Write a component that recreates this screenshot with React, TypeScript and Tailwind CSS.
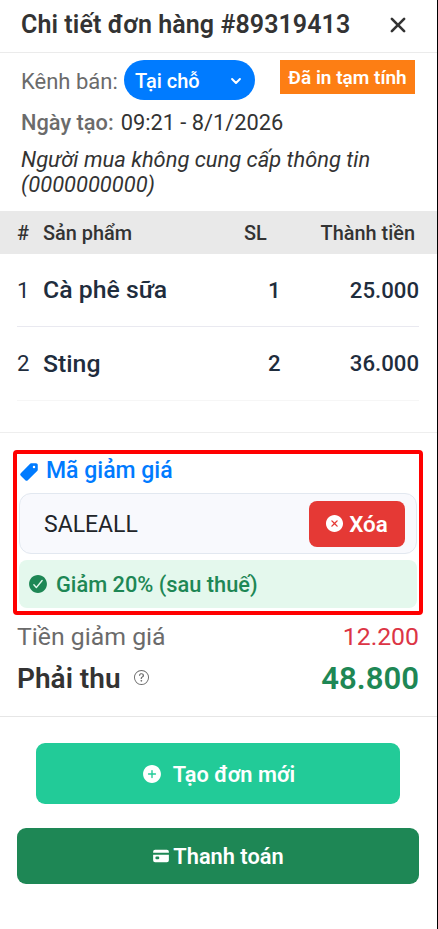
import React from 'react';
import {
    IoAddCircle,
    IoCard,
    IoCheckmarkCircle,
    IoChevronDown,
    IoClose,
    IoCloseCircle,
    IoPricetag,
} from 'react-icons/io5';
import { BsQuestionCircle } from 'react-icons/bs';

interface OrderItem {
    name: string;
    quantity: number;
    total: string;
}

const items: OrderItem[] = [
    { name: 'Cà phê sữa', quantity: 1, total: '25.000' },
    { name: 'Sting', quantity: 2, total: '36.000' },
];

const Header: React.FC = () => (
    <header className="flex h-[53px] items-start justify-between border-b border-[#ebebeb] pt-2 pr-[25px] pl-[21px]">
        <h1 className="text-[25px] leading-[34px] font-semibold tracking-[0.08px] whitespace-nowrap">
            Chi tiết đơn hàng #89319413
        </h1>
        <button className="mt-[3px]">
            <IoClose size={28} />
        </button>
    </header>
);

const OrderInfo: React.FC = () => (
    <section className="h-[158px] pt-[7px] pr-[22px] pl-[21px] text-[22px]">
        <div className="flex h-10 items-start">
            <span className="w-[103px] leading-[44px] whitespace-nowrap text-[#6b6b6b]">Kênh bán:</span>
            <button className="flex h-10 w-[131px] items-center justify-between rounded-full bg-[#007bff] pt-px pr-3 pl-[11px] text-[20px] font-medium text-white">
                Tại chỗ
                <IoChevronDown size={14} className="[&_path]:[stroke-width:72px]" />
            </button>
            <span className="ml-auto h-[34px] w-[135px] bg-[#fd7e14] text-center text-[19px] leading-[36px] font-semibold whitespace-nowrap text-white">
                Đã in tạm tính
            </span>
        </div>
        <p className="mt-2 flex gap-[7px] text-[21.8px] leading-[30px] whitespace-nowrap">
            <span className="font-medium text-[#6b6b6b]">Ngày tạo:</span>
            <span>09:21 - 8/1/2026</span>
        </p>
        <p className="mt-[9px] text-[21.9px] leading-[25px] italic">
            Người mua không cung cấp thông tin
            <br />
            (0000000000)
        </p>
    </section>
);

const ItemsTable: React.FC = () => (
    <section className="h-[222px] border-b border-[#eeeeee]">
        <div className="flex h-[43px] items-center bg-[#e9e9e9] pt-0.5 pr-[22px] pl-[17px] text-[19.9px] font-medium">
            <span className="w-[26px]">#</span>
            <span className="w-[201px]">Sản phẩm</span>
            <span>SL</span>
            <span className="ml-auto">Thành tiền</span>
        </div>
        <ul className="pr-[18px] pl-[17px] text-[22.2px] text-[#1f2d3d]">
            {items.map((item, index) => (
                <li
                    key={item.name}
                    className="flex h-[73px] items-center border-b border-[#e9e9f0] pt-px last:h-[74px] last:border-[#f6f6f6]"
                >
                    <span className="w-[26px]">{index + 1}</span>
                    <span className="w-[225px] pb-px text-[24.8px] font-medium">{item.name}</span>
                    <span className="font-medium">{item.quantity}</span>
                    <span className="ml-auto font-medium">{item.total}</span>
                </li>
            ))}
        </ul>
    </section>
);

const DiscountBox: React.FC = () => (
    <section className="mt-[17px] ml-[13px] h-[165px] w-[410px] rounded-[4px] border-4 border-[#ff0000] px-0.5">
        <div className="flex h-[39px] items-center gap-[7px] pb-1 text-[23px] font-medium text-[#007bff]">
            <IoPricetag size={20} />
            Mã giảm giá
        </div>
        <div className="flex h-[61px] items-center justify-between rounded-xl border border-[#e2e8f0] bg-[#f8f9fd] pr-[11px] pl-6">
            <span className="pt-1 text-[23px] text-[#212529]">SALEALL</span>
            <button className="flex h-[46px] w-24 items-center justify-center gap-1 rounded-lg bg-[#e53935] pt-[3px] pr-0.5 text-[22.4px] font-semibold text-white">
                <IoCloseCircle size={21} className="-mt-1" />
                Xóa
            </button>
        </div>
        <div className="mt-1.5 flex h-12 items-center gap-2 rounded-lg bg-[#e4f8ed] pt-[3px] pl-2 text-[21.8px] font-medium text-[#1e8755]">
            <IoCheckmarkCircle size={22} className="-mt-1 -mr-px" />
            Giảm 20% (sau thuế)
        </div>
    </section>
);

const Summary: React.FC = () => (
    <section className="h-[102px] border-b border-[#e6e6e6] pt-[5px] pr-[18px] pl-[17px]">
        <div className="flex h-[34px] items-center justify-between text-[24.8px]">
            <span className="text-[#6b6b6b]">Tiền giảm giá</span>
            <span className="text-[#dc3545]">12.200</span>
        </div>
        <div className="flex h-[49px] items-center justify-between font-semibold">
            <span className="flex items-center gap-[13px] pt-px text-[28px]">
                Phải thu
                <BsQuestionCircle size={15} className="-mt-[3px] text-[#6b6b6b]" />
            </span>
            <span className="pt-0.5 text-[31.1px] text-[#1e8755]">48.800</span>
        </div>
    </section>
);

const Actions: React.FC = () => (
    <footer className="flex flex-col items-start pt-[26px] text-[21.8px] font-semibold text-white">
        <button className="ml-9 flex h-[61px] w-[364px] items-center justify-center gap-2.5 rounded-[9px] bg-[#22cb98] pt-[3px]">
            <IoAddCircle size={22} className="-mt-[3px]" />
            Tạo đơn mới
        </button>
        <button className="mt-6 ml-[17px] flex h-14 w-[402px] items-center justify-center gap-[3px] rounded-[9px] bg-[#1e8755] pt-[3px]">
            <IoCard size={18} className="-mt-[3px]" />
            Thanh toán
        </button>
    </footer>
);

const App: React.FC = () => {
    return (
        <main className="h-[929px] w-[438px] overflow-hidden border-r border-black bg-white font-['Roboto',sans-serif] text-[#333333]">
            <Header />
            <OrderInfo />
            <ItemsTable />
            <DiscountBox />
            <Summary />
            <Actions />
        </main>
    );
};

export default App;
